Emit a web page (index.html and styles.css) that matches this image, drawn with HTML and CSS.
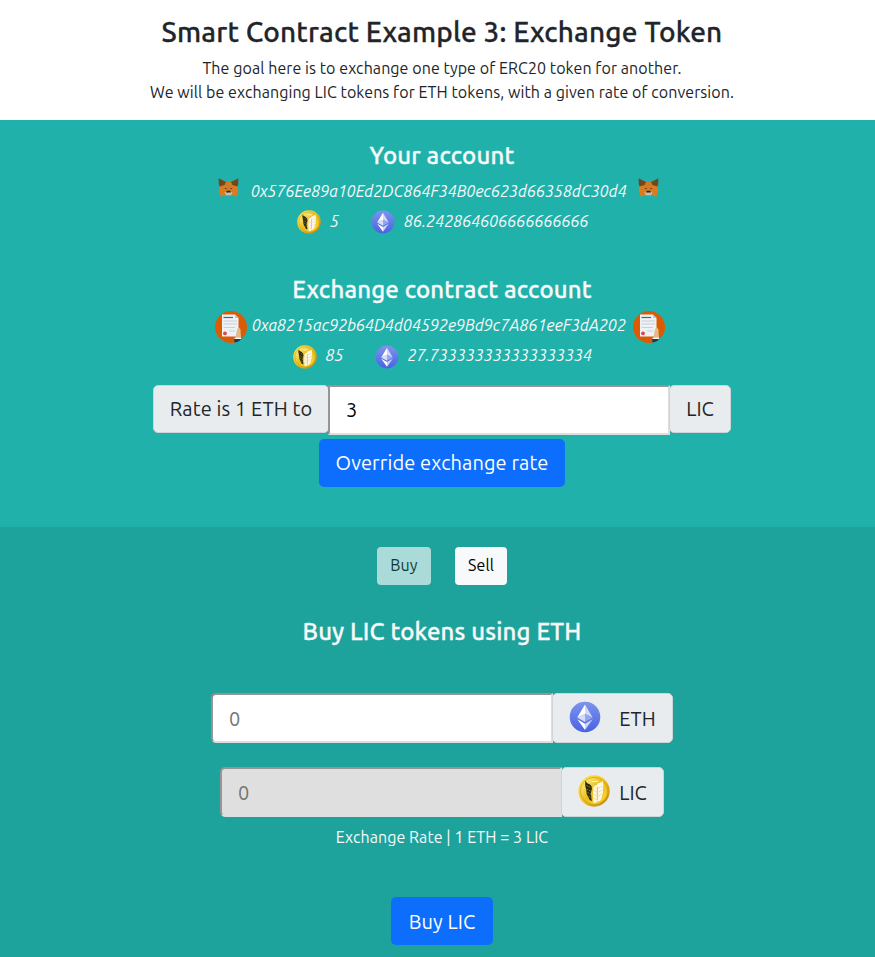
FILE: index.html
```html
<!DOCTYPE html>
<html lang="en">
<head>
<meta charset="utf-8">
<title>Exchange Token</title>
<link rel="stylesheet" href="styles.css">
</head>
<body>
<svg class="defs" width="0" height="0" aria-hidden="true">
  <defs>
    <linearGradient id="gold" x1="0" y1="0" x2="1" y2="1"><stop offset="0" stop-color="#ffef58"/><stop offset=".45" stop-color="#f5c51c"/><stop offset="1" stop-color="#b87b08"/></linearGradient>
    <linearGradient id="goldin" x1="0" y1="0" x2="1" y2="1"><stop offset="0" stop-color="#fff799"/><stop offset=".5" stop-color="#e9bc20"/><stop offset="1" stop-color="#ffdc36"/></linearGradient>
    <linearGradient id="blue" x1="0" y1="0" x2="0" y2="1"><stop offset="0" stop-color="#7d94ee"/><stop offset="1" stop-color="#4a62e2"/></linearGradient>
  </defs>
  <symbol id="coin" viewBox="0 0 32 32">
    <circle cx="16" cy="16" r="15.7" fill="url(#gold)"/>
    <circle cx="16" cy="16" r="13.6" fill="url(#goldin)" stroke="#d29a10" stroke-width=".7"/>
    <path d="M7.500 5.500Q8 8 11 9Q14 10.500 14 13.500L12.800 18L13.800 26Q11 25 10.300 22Q8 19 8.300 15Q6.500 9 7.500 5.500Z" fill="#2b2707"/>
    <path d="M8.500 10.500l5 2.500M8.800 14l4.500 2.500M9.500 17.500l3.500 2M10.500 21l3 2" stroke="#cfa928" stroke-width=".7" stroke-dasharray="1.600 .8"/>
    <path d="M15.300 13Q15.300 11 17.500 10.500L19 10Q19 8.500 21 8Q24 7.500 24.700 5.500Q26 9 25 14Q25.300 18 24 21Q23.500 25.500 20.500 26.500L19.700 25.500Q19 28 15.500 28Q14.300 20 15.300 13Z" fill="#fff8e5"/>
    <path d="M13.500 6.500H20" stroke="#fff3cf" stroke-width="1"/>
    <path d="M19.300 12v13" stroke="#dfb741" stroke-width=".9"/>
    <path d="M15.500 15l3 2M15.500 19l3 2M15.500 23l3 1.500M20.500 13l4-2M20.500 17l4-2M20.500 21l3.500-2" fill="none" stroke="#d9bd78" stroke-width=".7" stroke-dasharray="1.500 .8"/>
  </symbol>
  <symbol id="eth" viewBox="0 0 32 32">
    <circle cx="16" cy="16" r="15.300" fill="url(#blue)"/>
    <path d="M16 3.500L8.300 16.500L16 13Z" fill="#fff"/>
    <path d="M16 3.500L23.700 16.500L16 13Z" fill="#d0d9fa"/>
    <path d="M8.300 16.500L16 13V21Z" fill="#d5ddfb"/>
    <path d="M23.700 16.500L16 13V21Z" fill="#93a6ee"/>
    <path d="M8.300 18.300L16 22.800V29Z" fill="#fff"/>
    <path d="M23.700 18.300L16 22.800V29Z" fill="#cbd5f8"/>
  </symbol>
  <symbol id="fox" viewBox="0 0 21 19">
    <path d="M1 1L8 4H13L20 1L19.500 8L20.300 13L18.500 18.500L14 17.500H7L2.500 18.500L.7 13L1.500 8Z" fill="#d97c20"/>
    <path d="M.7.300L8.300 4.300L6.500 7L1.500 8.500L.7 5ZM20.300.300L12.700 4.300L14.500 7L19.500 8.500L20.300 5Z" fill="#70471f"/>
    <path d="M7 5H14L13 11H8Z" fill="#d07a26"/>
    <path d="M6.300 10.300l2.300-.2-.3 1.200zM14.700 10.300l-2.300-.2.300 1.200z" fill="#24352f"/>
    <path d="M6.500 14.500L9 13H12L14.500 14.500L13 17.300H8Z" fill="#c9bcae"/>
    <path d="M8.700 12.800H12.300L13 14.600H8Z" fill="#2b211b"/>
  </symbol>
  <symbol id="contract" viewBox="0 0 32 32">
    <circle cx="16" cy="16" r="16" fill="#db5b05"/>
    <path d="M7 3.500H20L23.500 7V25.500H7Z" fill="#eef1f5"/>
    <path d="M20 3.500V7H23.500Z" fill="#bfc7cf"/>
    <path d="M8.500 6.500H18" stroke="#246eb8" stroke-width="1.200"/>
    <path d="M8.500 10H22M8.500 13H22M8.500 16.500H20M14 20h6" stroke="#c9cfd6" stroke-width="1"/>
    <circle cx="10" cy="22.300" r="1.900" fill="#e2444b"/>
    <path d="M21.500 20.500L23.300 15.500L25.500 18.500L26 27H20.500Z" fill="#e3ba88"/>
    <path d="M19 27.700L26 27L25.500 28.900Q23 31 19.500 31.500Z" fill="#203a55"/>
    <path d="M19.500 26.700H26V28H19.500Z" fill="#fff"/>
  </symbol>
</svg>

<div class="page">
  <header class="intro">
    <h1>Smart Contract Example 3: Exchange Token</h1>
    <p>The goal here is to exchange one type of ERC20 token for another.</p>
    <p>We will be exchanging LIC tokens for ETH tokens, with a given rate of conversion.</p>
  </header>

  <main>
    <section class="accounts">
      <h2>Your account</h2>
      <div class="address wallet">
        <svg class="fox"><use href="#fox"/></svg>
        <em>0x576Ee89a10Ed2DC864F34B0ec623d66358dC30d4</em>
        <svg class="fox"><use href="#fox"/></svg>
      </div>
      <div class="balances first">
        <svg class="token"><use href="#coin"/></svg><em class="lic">5</em>
        <svg class="token"><use href="#eth"/></svg><em class="amount">86.242864606666666666</em>
      </div>

      <h2>Exchange contract account</h2>
      <div class="address contract">
        <svg class="paper"><use href="#contract"/></svg>
        <em>0xa8215ac92b64D4d04592e9Bd9c7A861eeF3dA202</em>
        <svg class="paper"><use href="#contract"/></svg>
      </div>
      <div class="balances second">
        <svg class="token"><use href="#coin"/></svg><em class="lic">85</em>
        <svg class="token"><use href="#eth"/></svg><em class="amount">27.733333333333333334</em>
      </div>

      <div class="group rate">
        <span class="addon lead">Rate is 1 ETH to</span>
        <input class="field" type="text" value="3">
        <span class="addon tail">LIC</span>
      </div>
      <button class="btn override" type="button">Override exchange rate</button>
    </section>

    <section class="trade">
      <div class="tabs">
        <button class="tab buy" type="button" disabled>Buy</button>
        <button class="tab sell" type="button">Sell</button>
      </div>
      <h2>Buy LIC tokens using ETH</h2>
      <div class="group pay">
        <input class="field" type="text" placeholder="0">
        <span class="addon"><svg><use href="#eth"/></svg>ETH</span>
      </div>
      <div class="group receive">
        <input class="field" type="text" placeholder="0" disabled>
        <span class="addon"><svg><use href="#coin"/></svg>LIC</span>
      </div>
      <p class="quote">Exchange Rate | 1 ETH = 3 LIC</p>
      <button class="btn submit" type="button">Buy LIC</button>
    </section>
  </main>
</div>
</body>
</html>
```

FILE: styles.css
```css
* { box-sizing: border-box; }
html, body { margin: 0; overflow: hidden; }
body {
  font: 16px/24px Ubuntu, "Noto Sans", sans-serif;
  color: #212529;
  background: #fff;
}
.defs { position: absolute; }
.page { width: 884px; height: 957px; overflow: hidden; text-align: center; }
h1, h2, p { margin: 0; white-space: nowrap; }
h1, h2 { font-weight: 500; -webkit-text-stroke: .3px currentColor; }
p { letter-spacing: .07px; }
svg { flex: none; display: block; }
em { display: block; text-align: left; white-space: nowrap; flex: none; }

.intro { height: 120px; padding-top: 15px; }
h1 { font-size: 28px; line-height: 34px; margin-bottom: 7px; letter-spacing: .17px; }
h2 { font-size: 24px; line-height: 29px; letter-spacing: .15px; }

.accounts { height: 407px; padding-top: 21px; background: #20b2aa; color: #f8f9fa; }
.accounts, .trade { display: flex; flex-direction: column; align-items: center; }
.address, .balances { display: flex; align-items: center; }
.wallet { height: 28px; margin-top: 7px; gap: 12px; padding-right: 7px; }
.fox { width: 21px; height: 19px; margin-bottom: 8px; }
.wallet em { width: 375px; letter-spacing: -.02px; }
.balances { height: 24px; }
.balances em { margin-top: -2px; }
.token { width: 24px; height: 24px; }
.first { margin: 5px 0 41px; }
.first .lic { width: 50px; padding-left: 9px; }
.second .lic { width: 58px; padding-left: 9px; }
.amount { width: 192px; padding-left: 9px; }
.contract { height: 32px; margin-top: 7px; gap: 5px; padding-right: 4px; }
.paper { width: 32px; height: 32px; }
.contract em { width: 376px; margin-top: -4px; letter-spacing: -.02px; }
.second { margin: 2px 0 16px; padding-right: 1px; }
.second em { margin-top: -4px; }

.group { display: flex; align-items: flex-start; font-size: 20px; line-height: 30px; }
.field {
  width: 342px;
  height: 50px;
  margin: 0;
  padding: 8px 16px;
  border: 2px solid;
  border-color: #959595 #dedede #dedede #959595;
  border-radius: 0;
  background: #fff;
  color: #000;
  font: inherit;
}
.rate .field { padding: 7px 16px 9px; }
.field::placeholder { color: #757575; opacity: 1; }
.field:disabled { background: #dfdfdf; border-color: #959595 #dfdfdf #dfdfdf #959595; }
.addon {
  display: flex;
  align-items: center;
  justify-content: center;
  height: 48px;
  border: 1px solid #ced4da;
  border-radius: 5px;
  background: #e9ecef;
  color: #212529;
  white-space: nowrap;
  flex: none;
}
.lead { width: 176px; margin-right: -1px; letter-spacing: .12px; }
.tail { width: 62px; margin-left: -1px; }
.btn {
  border: 0;
  border-radius: 5px;
  background: #0d6efd;
  color: #fff;
  height: 48px;
  padding: 0;
  font: inherit;
  font-size: 20px;
  letter-spacing: .1px;
  flex: none;
}
.override { width: 246px; margin-top: 4px; }

.trade { height: 430px; padding-top: 20px; background: #1da39c; color: #f8f9fa; }
.tabs { display: flex; gap: 24px; margin-bottom: 32px; }
.tab { height: 38px; padding: 0 0 2px; border: 0; border-radius: 4px; background: #f8f9fa; color: #000; font: inherit; letter-spacing: .1px; }
.buy { width: 54px; opacity: .65; }
.sell { width: 52px; }
.pay { margin-top: 47px; }
.receive { margin-top: 24px; }
.pay .field, .receive .field { border-radius: 5px 0 0 5px; }
.pay .addon, .receive .addon { height: 50px; margin-left: -1px; padding-top: 2px; }
.pay .addon { width: 121px; gap: 18px; }
.receive .addon { width: 103px; gap: 9px; }
.group .addon svg { width: 32px; height: 32px; margin-bottom: 4px; }
.quote { margin-top: 8px; }
.submit { width: 102px; margin-top: 48px; padding-top: 2px; }
```
